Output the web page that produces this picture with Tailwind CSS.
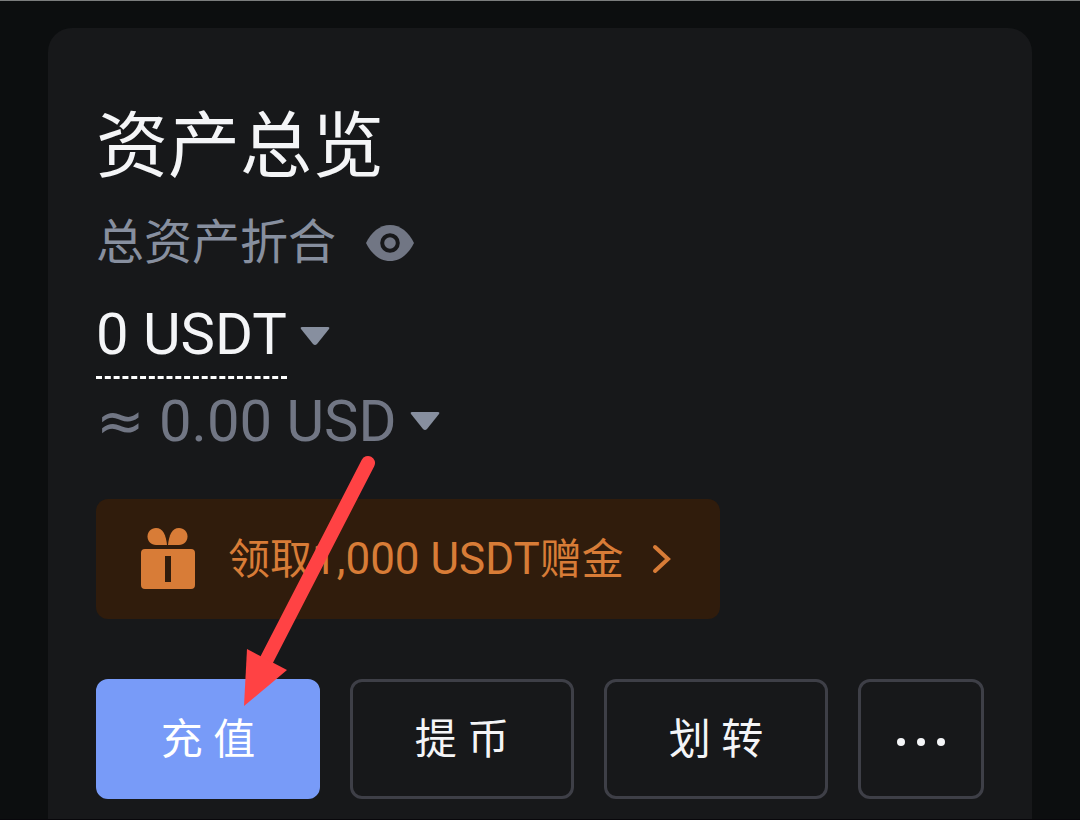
<!DOCTYPE html>
<html lang="zh-CN">
<head>
    <meta charset="UTF-8">
    <meta name="viewport" content="width=device-width, initial-scale=1.0">
    <title>资产总览</title>
    <script src="https://cdn.jsdelivr.net/npm/@tailwindcss/browser@4"></script>
</head>
<body class="bg-[#0c0e0f] font-['Roboto','Noto_Sans_CJK_SC',sans-serif] text-[#f4f5f7]">

    <main class="flex min-h-screen flex-col border-t border-t-[#7b7d7d] border-b border-b-[#08070b] px-12 pt-[27px]">
        <section class="relative flex-1 rounded-t-3xl bg-[#17181a] px-12 pt-[71px] pb-5">
            <h1 class="text-[72px] leading-[96px]">资产总览</h1>

            <div class="mt-3 flex items-center gap-[30px] text-5xl leading-[72px] text-[#878f9f]">
                <span>总资产折合</span>
                <button type="button" aria-label="显示或隐藏资产" class="text-[#717684]">
                    <svg class="h-9 w-12" viewBox="0 0 48 36" fill="none">
                        <path d="M0 18C5 7.500 13.500 0 24 0S43 7.500 48 18C43 28.500 34.500 36 24 36S5 28.500 0 18Z" fill="currentColor"/>
                        <circle cx="24" cy="18" r="7.800" stroke="#17181a" stroke-width="4"/>
                    </svg>
                </button>
            </div>

            <button type="button" class="mt-[13px] flex items-center gap-3 text-[58px] leading-[84px]">
                <span class="border-b-3 border-dashed border-white">0 USDT</span>
                <svg class="h-5 w-8 text-[#878f9f]" viewBox="0 0 32 20" fill="currentColor">
                    <path d="M3 1H29Q31 1 30 3L18 18Q16 20 14 18L2 3Q1 1 3 1Z"/>
                </svg>
            </button>

            <button type="button" class="flex h-[84px] items-center gap-3 text-[58px] leading-[84px] text-[#717684]">
                <span><span class="font-['DejaVu_Sans',sans-serif]">≈</span> 0.00 USD</span>
                <svg class="h-5 w-8 text-[#878f9f]" viewBox="0 0 32 20" fill="currentColor">
                    <path d="M3 1H29Q31 1 30 3L18 18Q16 20 14 18L2 3Q1 1 3 1Z"/>
                </svg>
            </button>

            <a href="#" class="mt-9 inline-flex h-[120px] items-center rounded-xl bg-[#301c0c] pr-12 pl-11 text-[42px] text-[#d87c37]">
                <svg class="h-16 w-14" viewBox="0 0 56 64" fill="currentColor">
                    <path d="M27 18C26 8 23 1 16 1C11 1 7.500 5 7.500 9.500C7.500 14 11 18 16 18Z"/>
                    <path d="M28 18C29 8 32 1 39 1C44 1 47.500 5 47.500 9.500C47.500 14 44 18 39 18Z"/>
                    <path fill-rule="evenodd" d="M5 22H51Q55 22 55 26V58Q55 62 51 62H5Q1 62 1 58V26Q1 22 5 22ZM25 29V55H31V29Z"/>
                </svg>
                <span class="ml-8">领取<span class="text-[44px]">1,000 USDT</span>赠金</span>
                <svg class="ml-7 h-8 w-5" viewBox="0 0 20 32" fill="none" stroke="currentColor" stroke-width="4" stroke-linecap="round">
                    <path d="M3 4L16 16L3 28"/>
                </svg>
            </a>

            <div class="mt-[60px] flex gap-[30px] text-[42px]">
                <button type="button" class="h-[120px] flex-1 rounded-xl border-3 border-[#789bf8] bg-[#789bf8] text-white">充 值</button>
                <button type="button" class="h-[120px] flex-1 rounded-xl border-3 border-[#3e3f47]">提 币</button>
                <button type="button" class="h-[120px] flex-1 rounded-xl border-3 border-[#3e3f47]">划 转</button>
                <button type="button" aria-label="更多" class="flex h-[120px] w-[126px] items-center justify-center gap-3 rounded-xl border-3 border-[#3e3f47] pt-1.5">
                    <span class="size-2 rounded-full bg-[#f4f5f7]"></span>
                    <span class="size-2 rounded-full bg-[#f4f5f7]"></span>
                    <span class="size-2 rounded-full bg-[#f4f5f7]"></span>
                </button>
            </div>

            <!-- pointer towards the deposit button -->
            <svg class="pointer-events-none absolute top-[420px] left-[190px] h-[270px] w-[150px]" viewBox="238 448 150 270" aria-hidden="true">
                <path d="M368 463L266 661" stroke="#ff4244" stroke-width="14" stroke-linecap="round"/>
                <path d="M247 649L287 670L244 706Z" fill="#ff4244"/>
            </svg>
        </section>
    </main>

</body>
</html>
